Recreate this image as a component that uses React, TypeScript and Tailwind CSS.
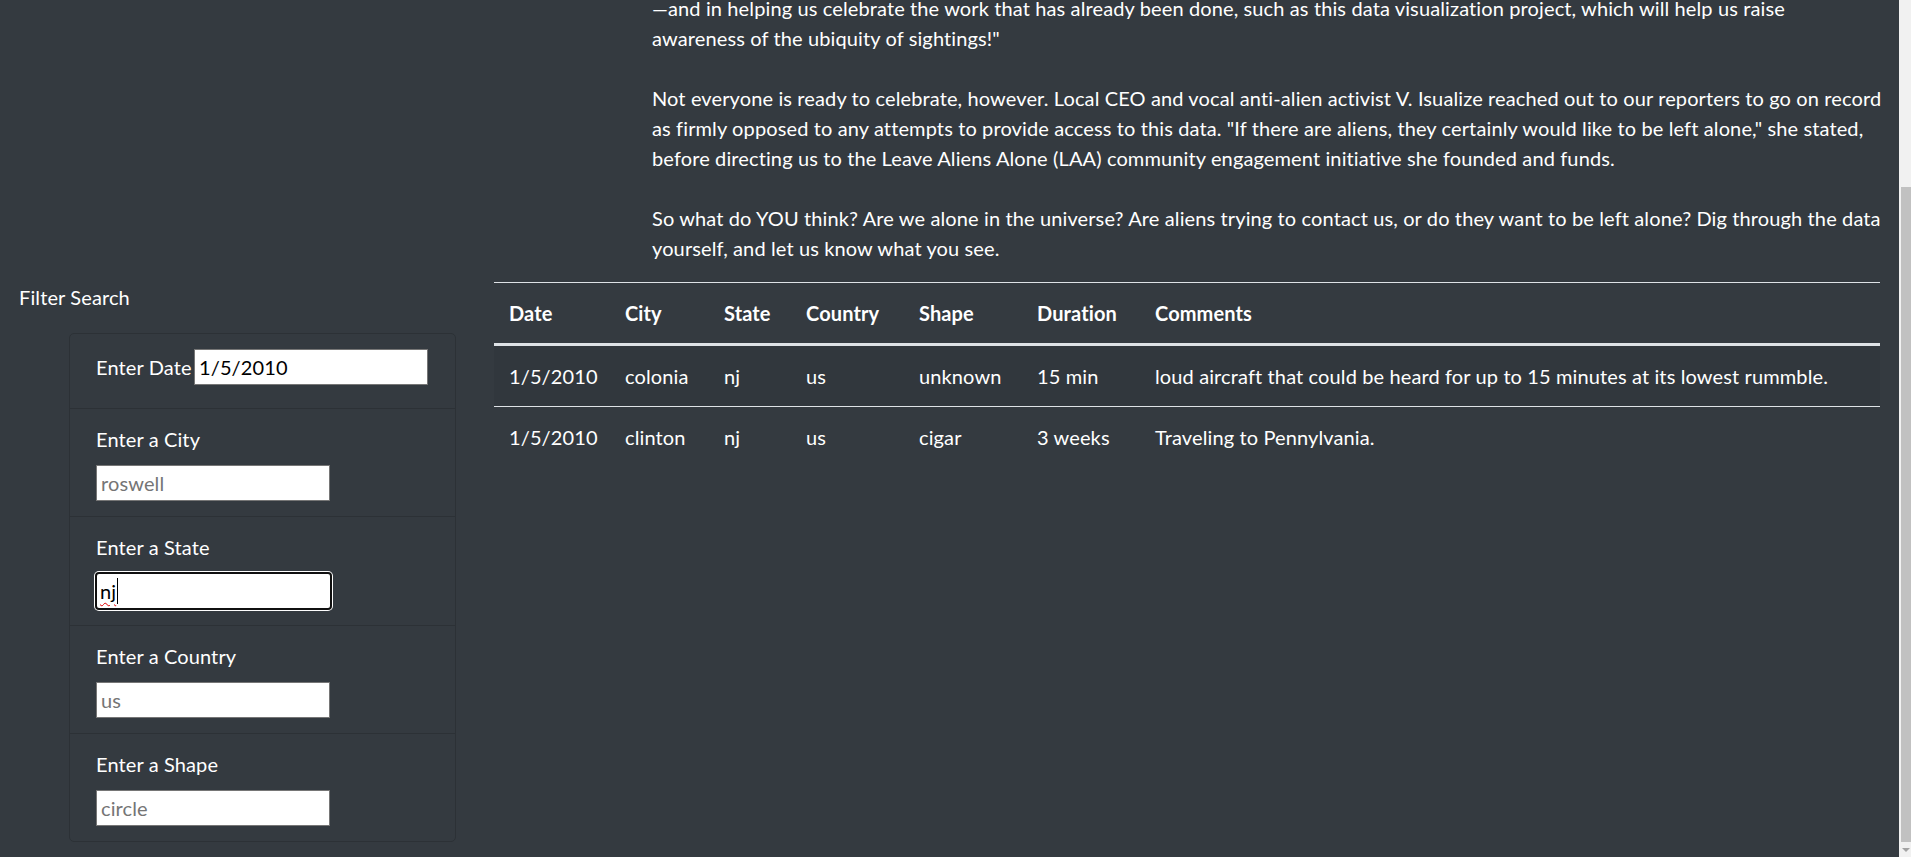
import React from "react";

const FONT = "font-['Lato','Open_Sans',sans-serif]";

function FieldInput({ value, placeholder }: { value?: string; placeholder?: string }) {
  return (
    <input
      readOnly
      value={value ?? ""}
      placeholder={placeholder}
      className={`${FONT} block h-[36px] w-[234px] border border-[#767676] bg-white px-[4px] text-[20px] tracking-[0.12px] text-black placeholder:text-[#757575] outline-none`}
    />
  );
}

function Field({ label, placeholder }: { label: string; placeholder: string }) {
  return (
    <div className="border-t border-[#2c3136] px-[26px] pb-[15px] pt-[15px]">
      <div className="h-[30px] leading-[30px]">{label}</div>
      <div className="mt-[11px]">
        <FieldInput placeholder={placeholder} />
      </div>
    </div>
  );
}

export default function App() {
  const headers = ["Date", "City", "State", "Country", "Shape", "Duration", "Comments"];
  const widths = ["w-[116px]", "w-[99px]", "w-[82px]", "w-[113px]", "w-[118px]", "w-[118px]", ""];
  const rows = [
    ["1/5/2010", "colonia", "nj", "us", "unknown", "15 min", "loud aircraft that could be heard for up to 15 minutes at its lowest rummble."],
    ["1/5/2010", "clinton", "nj", "us", "cigar", "3 weeks", "Traveling to Pennylvania."],
  ];

  return (
    <div className={`${FONT} flex h-[857px] w-full overflow-hidden bg-[#343a40] text-[20px] leading-[30px] tracking-[0.12px] text-white`}>
      <div className="min-w-0 flex-1">
        {/* Article text (scrolled) */}
        <div className="ml-[652px] mt-[-7px] w-[1228px] whitespace-nowrap">
          <p className="mb-[30px]">
            —and in helping us celebrate the work that has already been done, such as this data visualization project, which will help us raise
            <br />
            awareness of the ubiquity of sightings!"
          </p>
          <p className="mb-[30px]">
            Not everyone is ready to celebrate, however. Local CEO and vocal anti-alien activist V. Isualize reached out to our reporters to go on record
            <br />
            as firmly opposed to any attempts to provide access to this data. "If there are aliens, they certainly would like to be left alone," she stated,
            <br />
            before directing us to the Leave Aliens Alone (LAA) community engagement initiative she founded and funds.
          </p>
          <p className="mb-[19px]">
            So what do YOU think? Are we alone in the universe? Are aliens trying to contact us, or do they want to be left alone? Dig through the data
            <br />
            yourself, and let us know what you see.
          </p>
        </div>

        {/* Main row */}
        <div className="flex">
          {/* Sidebar */}
          <div className="w-[475px] shrink-0 px-[19px]">
            <div className="h-[30px] leading-[30px]">Filter Search</div>
            <div className="ml-[50px] mt-[21px] overflow-hidden rounded-[5px] border border-[#2c3136]">
              <div className="flex items-center px-[26px] pb-[23px] pt-[15px]">
                <span className="w-[98px] shrink-0 leading-[30px]">Enter Date</span>
                <FieldInput value="1/5/2010" />
              </div>
              <Field label="Enter a City" placeholder="roswell" />
              <div className="border-t border-[#2c3136] px-[26px] pb-[15px] pt-[15px]">
                <div className="h-[30px] leading-[30px]">Enter a State</div>
                <div className="mt-[10px] ml-[-1px] flex h-[38px] w-[237px] items-center rounded-[4px] border-2 border-[#101010] bg-white pl-[3px] text-black shadow-[0_0_0_1px_#ffffff]">
                  <span className="leading-[24px] underline decoration-[#e00000] decoration-wavy decoration-[1px] underline-offset-[3px]">nj</span>
                  <span className="ml-[1px] h-[26px] w-[1px] bg-black" />
                </div>
              </div>
              <Field label="Enter a Country" placeholder="us" />
              <Field label="Enter a Shape" placeholder="circle" />
            </div>
          </div>

          {/* Table */}
          <div className="min-w-0 flex-1 px-[19px]">
            <table className="w-full table-fixed border-separate border-spacing-0 text-left">
              <thead>
                <tr>
                  {headers.map((h, i) => (
                    <th
                      key={h}
                      className={`${widths[i]} border-b-[3px] border-t border-[#dee2e6] px-[15px] py-[15px] font-bold leading-[30px]`}
                    >
                      {h}
                    </th>
                  ))}
                </tr>
              </thead>
              <tbody>
                {rows.map((r, ri) => (
                  <tr key={ri} className={ri === 0 ? "bg-[#31373d]" : ""}>
                    {r.map((c, ci) => (
                      <td
                        key={ci}
                        className={`${ri === 0 ? "" : "border-t border-[#dee2e6]"} whitespace-nowrap px-[15px] py-[15px] align-top leading-[30px]`}
                      >
                        {c}
                      </td>
                    ))}
                  </tr>
                ))}
              </tbody>
            </table>
          </div>
        </div>
      </div>

      {/* Scrollbar */}
      <div className="flex w-[12px] shrink-0 flex-col bg-[#f1f1f1]">
        <div className="h-[187px]" />
        <div className="ml-[2px] h-[655px] w-[10px] bg-[#c1c1c1]" />
        <div className="flex flex-1 items-center justify-center pl-[2px]">
          <div className="h-0 w-0 border-x-[4px] border-t-[4px] border-x-transparent border-t-[#a3a3a3]" />
        </div>
      </div>
    </div>
  );
}
